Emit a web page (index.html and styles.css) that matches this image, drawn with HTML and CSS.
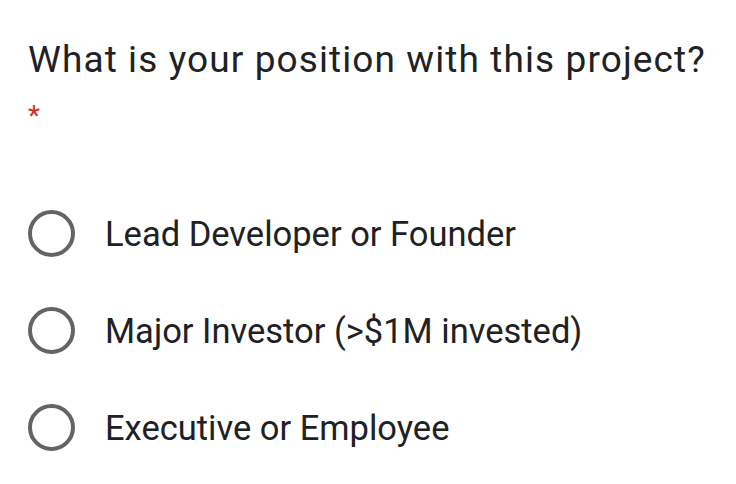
FILE: index.html
```html
<!DOCTYPE html>
<html>
<head>
<meta charset="utf-8">
<link rel="stylesheet" href="styles.css">
</head>
<body>
<div class="question">
  <h1 class="title">What is your position with this project?</h1>
  <div class="required">*</div>
  <div class="options">
    <label class="option"><span class="radio"></span><span class="label">Lead Developer or Founder</span></label>
    <label class="option"><span class="radio"></span><span class="label">Major Investor (&gt;$1M invested)</span></label>
    <label class="option"><span class="radio"></span><span class="label">Executive or Employee</span></label>
  </div>
</div>
</body>
</html>
```
FILE: styles.css
```css
html, body {
  margin: 0;
  padding: 0;
  background: #ffffff;
}
body {
  font-family: Roboto, "Liberation Sans", sans-serif;
  color: #202124;
}
.question {
  padding: 38px 0 0 28px;
}
.title {
  margin: 0;
  font-size: 37px;
  font-weight: 400;
  line-height: 44px;
  letter-spacing: 1.1px;
}
.required {
  color: #d93025;
  font-size: 28px;
  line-height: 28px;
  margin-top: 20px;
}
.options {
  display: flex;
  flex-direction: column;
  gap: 50px;
  margin-top: 80px;
}
.option {
  display: flex;
  align-items: center;
  gap: 30px;
}
.radio {
  box-sizing: border-box;
  width: 47px;
  height: 47px;
  border: 4px solid #646464;
  border-radius: 50%;
  flex: none;
}
.label {
  font-size: 34.5px;
  line-height: 40px;
}
```
